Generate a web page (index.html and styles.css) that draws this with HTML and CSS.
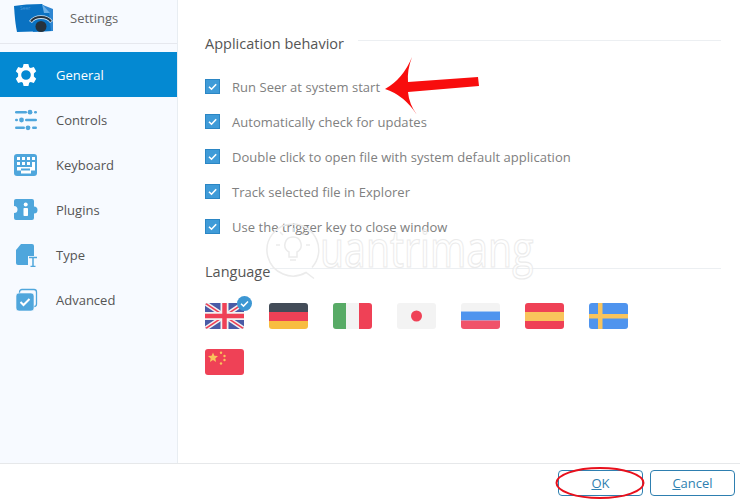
FILE: index.html
```html
<!DOCTYPE html>
<html lang="en">
<head>
<meta charset="utf-8">
<title>Settings</title>
<link rel="stylesheet" href="styles.css">
</head>
<body>
<div class="app">
  <div class="columns">
    <aside class="sidebar">
      <header class="brand">
        <svg class="logo" width="41" height="30" viewBox="0 0 41 30">
          <path d="M14 3 L30 2 L40 6 L40 28 L20 29Z" fill="#2f86d2"/>
          <path d="M1 3 Q12 1 29 1 L36 9 L38 28 L4 29 Q2 20 1 3Z" fill="#0a72c2"/>
          <path d="M29 1 L37 10 L31 10Z" fill="#6db0e6"/>
          <text class="logo-text" x="7" y="7">Seer</text>
          <path d="M17.500 19 C22 12.500 34 12.500 38.500 19" fill="none" stroke="#cfe4f5" stroke-width="3.600"/>
          <path d="M18 18.500 C22 12.500 34 12.500 38 18.500" fill="none" stroke="#26323c" stroke-width="2.200"/>
          <circle cx="28" cy="23.500" r="5.500" fill="#26323c"/>
        </svg>
        <span class="brand-title">Settings</span>
      </header>
      <nav class="nav">
        <a class="nav-item active">
          <svg class="nav-icon" viewBox="0 0 24 24"><path fill="#fff" fill-rule="evenodd" d="M9.600 1h4.800l.8 3.200 1.500.8 3.100-1 2.400 4.200-2.300 2.200v3.200l2.300 2.200-2.400 4.200-3.100-1-1.500.8-.8 3.200H9.600l-.8-3.200-1.500-.8-3.100 1-2.400-4.200 2.300-2.200v-3.200L1.800 8.200l2.400-4.200 3.100 1 1.500-.8zM12 7.200a4.800 4.800 0 1 0 0 9.600 4.800 4.800 0 0 0 0-9.600z"/></svg>
          <span>General</span>
        </a>
        <a class="nav-item">
          <svg class="nav-icon" viewBox="0 0 24 24"><g fill="#4fa6dc"><rect x="1" y="3" width="12" height="2.400" rx="1.200"/><circle cx="16" cy="4.200" r="2.400"/><rect x="20" y="3" width="3" height="2.400" rx="1.200"/><rect x="1" y="10.800" width="3" height="2.400" rx="1.200"/><circle cx="7.500" cy="12" r="2.400"/><rect x="11" y="10.800" width="12" height="2.400" rx="1.200"/><rect x="1" y="18.600" width="10" height="2.400" rx="1.200"/><circle cx="14" cy="19.800" r="2.400"/><rect x="18" y="18.600" width="5" height="2.400" rx="1.200"/></g></svg>
          <span>Controls</span>
        </a>
        <a class="nav-item">
          <svg class="nav-icon" viewBox="0 0 24 24"><rect x="0" y="1" width="23" height="22" rx="3" fill="#4fa6dc"/><g fill="#fff"><rect x="3" y="4" width="3" height="3"/><rect x="8" y="4" width="3" height="3"/><rect x="13" y="4" width="3" height="3"/><rect x="18" y="4" width="3" height="3"/><rect x="3" y="9" width="3" height="3"/><rect x="8" y="9" width="3" height="3"/><rect x="13" y="9" width="3" height="3"/><path d="M18 9h3v8.500h-4v3H7v-3H3V14h15z"/></g><rect x="7" y="15.500" width="9" height="2" fill="#4fa6dc"/></svg>
          <span>Keyboard</span>
        </a>
        <a class="nav-item">
          <svg class="nav-icon" viewBox="0 0 24 24"><path fill="#4fa6dc" d="M2 1h16a2 2 0 0 1 2 2v5.500a3.500 3.500 0 0 1 0 7V20a2 2 0 0 1-2 2H2a2 2 0 0 1-2-2v-5a3.500 3.500 0 0 0 0-7V3a2 2 0 0 1 2-2z"/><rect x="9.500" y="10" width="4.500" height="8" rx=".8" fill="#fff"/><circle cx="11.700" cy="6.500" r="2" fill="#fff"/></svg>
          <span>Plugins</span>
        </a>
        <a class="nav-item">
          <svg class="nav-icon" viewBox="0 0 24 24"><path fill="#4fa6dc" d="M7 1h11a2 2 0 0 1 2 2v17a2 2 0 0 1-2 2H4a2 2 0 0 1-2-2V7z"/><rect x="14" y="13" width="10" height="11" fill="#f7faff"/><path fill="none" stroke="#4fa6dc" stroke-width="1.500" d="M15 14.500h8M19 14.500v9M16.500 23.500h5"/></svg>
          <span>Type</span>
        </a>
        <a class="nav-item">
          <svg class="nav-icon" viewBox="0 0 24 24"><rect x="5.500" y="1.500" width="17" height="17" rx="2.500" fill="none" stroke="#4fa6dc" stroke-width="1.300"/><rect x="2" y="5" width="18" height="18" rx="3" fill="#4fa6dc" stroke="#f7faff" stroke-width=".6"/><path d="M6.500 14l3 3 6-6" fill="none" stroke="#fff" stroke-width="2"/></svg>
          <span>Advanced</span>
        </a>
      </nav>
    </aside>
    <main class="content">
      <section class="section">
        <h2 class="section-title"><span>Application behavior</span></h2>
        <ul class="options">
          <li class="option"><span class="check"><svg width="15" height="15" viewBox="0 0 15 15"><path d="M4 7.700l2.500 2.500 4.700-5" fill="none" stroke="#fff" stroke-width="1.600"/></svg></span>Run Seer at system start</li>
          <li class="option"><span class="check"><svg width="15" height="15" viewBox="0 0 15 15"><path d="M4 7.700l2.500 2.500 4.700-5" fill="none" stroke="#fff" stroke-width="1.600"/></svg></span>Automatically check for updates</li>
          <li class="option"><span class="check"><svg width="15" height="15" viewBox="0 0 15 15"><path d="M4 7.700l2.500 2.500 4.700-5" fill="none" stroke="#fff" stroke-width="1.600"/></svg></span>Double click to open file with system default application</li>
          <li class="option"><span class="check"><svg width="15" height="15" viewBox="0 0 15 15"><path d="M4 7.700l2.500 2.500 4.700-5" fill="none" stroke="#fff" stroke-width="1.600"/></svg></span>Track selected file in Explorer</li>
          <li class="option"><span class="check"><svg width="15" height="15" viewBox="0 0 15 15"><path d="M4 7.700l2.500 2.500 4.700-5" fill="none" stroke="#fff" stroke-width="1.600"/></svg></span>Use the trigger key to close window</li>
        </ul>
      </section>
      <section class="section lang-section">
        <h2 class="section-title"><span>Language</span></h2>
        <div class="flags">
          <div class="flag-cell selected">
            <svg class="flag" viewBox="0 0 39 26"><rect width="39" height="26" fill="#4a5ba6"/><path d="M0 0L39 26M39 0L0 26" stroke="#f2f2f2" stroke-width="4.500"/><path d="M0 0L39 26M39 0L0 26" stroke="#ef4156" stroke-width="1.500"/><path d="M19.500 0V26M0 13H39" stroke="#f2f2f2" stroke-width="8"/><path d="M19.500 0V26M0 13H39" stroke="#ef4156" stroke-width="4.500"/></svg>
            <span class="badge"><svg width="15" height="15" viewBox="0 0 15 15"><circle cx="7.500" cy="7.500" r="7.500" fill="#3d97d3"/><path d="M4 7.800l2.500 2.300 4.500-4.600" fill="none" stroke="#fff" stroke-width="1.500"/></svg></span>
          </div>
          <div class="flag-cell"><svg class="flag" viewBox="0 0 39 26"><rect width="39" height="9" fill="#434c58"/><rect y="9" width="39" height="9" fill="#ef4156"/><rect y="18" width="39" height="8" fill="#f8bd40"/></svg></div>
          <div class="flag-cell"><svg class="flag" viewBox="0 0 39 26"><rect width="13" height="26" fill="#58ab66"/><rect x="13" width="13" height="26" fill="#f3f3f3"/><rect x="26" width="13" height="26" fill="#ef4156"/></svg></div>
          <div class="flag-cell"><svg class="flag" viewBox="0 0 39 26"><rect width="39" height="26" fill="#f3f3f3"/><circle cx="19.500" cy="13" r="5.500" fill="#ef4156"/></svg></div>
          <div class="flag-cell"><svg class="flag" viewBox="0 0 39 26"><rect width="39" height="8.500" fill="#f3f3f3"/><rect y="8.500" width="39" height="9" fill="#4f94ee"/><rect y="17.500" width="39" height="8.500" fill="#f0536a"/></svg></div>
          <div class="flag-cell"><svg class="flag" viewBox="0 0 39 26"><rect width="39" height="26" fill="#ef4156"/><rect y="9" width="39" height="9" fill="#f9c45c"/></svg></div>
          <div class="flag-cell"><svg class="flag" viewBox="0 0 39 26"><rect width="39" height="26" fill="#4f94ee"/><rect x="9" width="4.500" height="26" fill="#f9c45c"/><rect y="11" width="39" height="4.500" fill="#f9c45c"/></svg></div>
          <div class="flag-cell"><svg class="flag" viewBox="0 0 39 26"><rect width="39" height="26" fill="#ef4156"/><path fill="#f9c45c" d="M8 3.500l1.400 3.300 3.600.3-2.700 2.300.8 3.500L8 11.100l-3.100 1.800.8-3.500L3 7.100l3.600-.3z"/><circle cx="16" cy="3.800" r="1.200" fill="#f9c45c"/><circle cx="19.500" cy="7" r="1.200" fill="#f9c45c"/><circle cx="19.500" cy="11" r="1.200" fill="#f9c45c"/><circle cx="16" cy="14.500" r="1.200" fill="#f9c45c"/></svg></div>
        </div>
      </section>
    </main>
  </div>
  <footer class="footer">
    <button class="btn"><u>O</u>K</button>
    <button class="btn"><u>C</u>ancel</button>
  </footer>

  <div class="watermark">
    <svg class="wm-q" width="60" height="66" viewBox="0 0 60 66"><g fill="none" stroke="#ebebeb" stroke-width="1.500"><path d="M28 2a26 26 0 1 0 13 48.500l8 6"/><path d="M28 2a26 26 0 0 1 19 43.500"/><path d="M28 15a8 8 0 0 0-4 15v5h8v-5a8 8 0 0 0-4-15zM25 38h6M15 23h-4M45 23h-4M18 13l-3-3M38 13l3-3M28 10V6"/></g></svg>
    <span class="wm-text">uantrimang</span>
  </div>
  <svg class="arrow" width="96" height="62" viewBox="0 0 96 62"><path fill="#f80d0d" d="M0 33 Q18 23 27 1 Q22 14 23 26 L93 21 L94 30 L23 36 Q24 48 32 59 Q19 39 0 33Z"/></svg>
  <svg class="ring" width="92" height="36" viewBox="0 0 92 36"><ellipse cx="46" cy="18" rx="43.500" ry="15" fill="none" stroke="#e8101c" stroke-width="2"/></svg>
</div>
</body>
</html>
```
FILE: styles.css
```css
* { box-sizing: border-box; }
html, body { margin: 0; padding: 0; }
body { background: #fff; font-family: "Open Sans", "Noto Sans", sans-serif; color: #555; }

.app { position: relative; width: 740px; height: 499px; overflow: hidden; display: flex; flex-direction: column; }
.columns { flex: 1; display: flex; min-height: 0; }

.sidebar { width: 178px; background: #f7faff; border-right: 1px solid #e8edf2; flex: none; }
.brand { height: 44px; border-bottom: 1px solid #e6e8ee; display: flex; align-items: flex-start; padding: 3px 0 0 13px; }
.logo { flex: none; display: block; }
.logo-text { font-size: 5px; fill: #4a9ad9; }
.brand-title { margin-left: 16px; margin-top: 5px; font-size: 13px; line-height: 20px; color: #666; }
.nav { margin-top: 8px; }
.nav-item { height: 45px; display: flex; align-items: center; padding-left: 14px; font-size: 13px; color: #555; }
.nav-item.active { background: #0489d2; color: #fff; }
.nav-icon { width: 24px; height: 24px; flex: none; margin-right: 18px; }

.content { flex: 1; padding: 31px 19px 0 27px; background: #fff; min-width: 0; }
.section-title { margin: 0; display: flex; align-items: center; font-size: 14.500px; font-weight: 400; line-height: 20px; color: #555; }
.section-title span { flex: none; position: relative; top: 3px; }
.section-title::after { content: ""; flex: 1; height: 1px; background: #eceff2; margin-left: 14px; position: relative; top: -1px; }

.options { list-style: none; margin: 18px 0 0; padding: 0; }
.option { height: 35px; display: flex; align-items: center; font-size: 13px; letter-spacing: .035px; color: #808080; }
.check { width: 15px; height: 15px; flex: none; margin-right: 12px; background: #3f9bd8; border: 1px solid #2b86c4; position: relative; }
.check svg { display: block; margin: -1px; }

.lang-section { margin-top: 15px; }
.lang-section .section-title::after { margin-left: 0; }
.flags { display: grid; grid-template-columns: repeat(7, 39px); gap: 20px 25px; margin-top: 24px; }
.flag-cell { position: relative; width: 39px; height: 26px; }
.flag { display: block; width: 39px; height: 26px; border-radius: 3px; }
.badge { position: absolute; top: -7px; right: -8px; width: 15px; height: 15px; }
.badge svg { display: block; }

.footer { height: 36px; flex: none; border-top: 1px solid #e6e8ea; display: flex; justify-content: flex-end; align-items: flex-start; gap: 7px; padding: 6px 5px 0 0; background: #fff; }
.btn { width: 85px; height: 26px; padding: 0; background: #fff; border: 1px solid #2e7fb0; border-radius: 4px; font: 13px/24px "Open Sans", "Noto Sans", sans-serif; color: #2e7fb0; }

.watermark { position: absolute; left: 265px; top: 222px; height: 66px; display: flex; align-items: flex-start; pointer-events: none; }
.wm-q { display: block; flex: none; }
.wm-text { display: block; font-size: 52px; line-height: 66px; margin-top: -8px; margin-left: -5px; color: rgba(255,255,255,.6); -webkit-text-stroke: 1.200px #ebebeb; transform: scaleX(.755); transform-origin: left center; }
.arrow { position: absolute; left: 385px; top: 56px; }
.ring { position: absolute; left: 554px; top: 465px; }
```
